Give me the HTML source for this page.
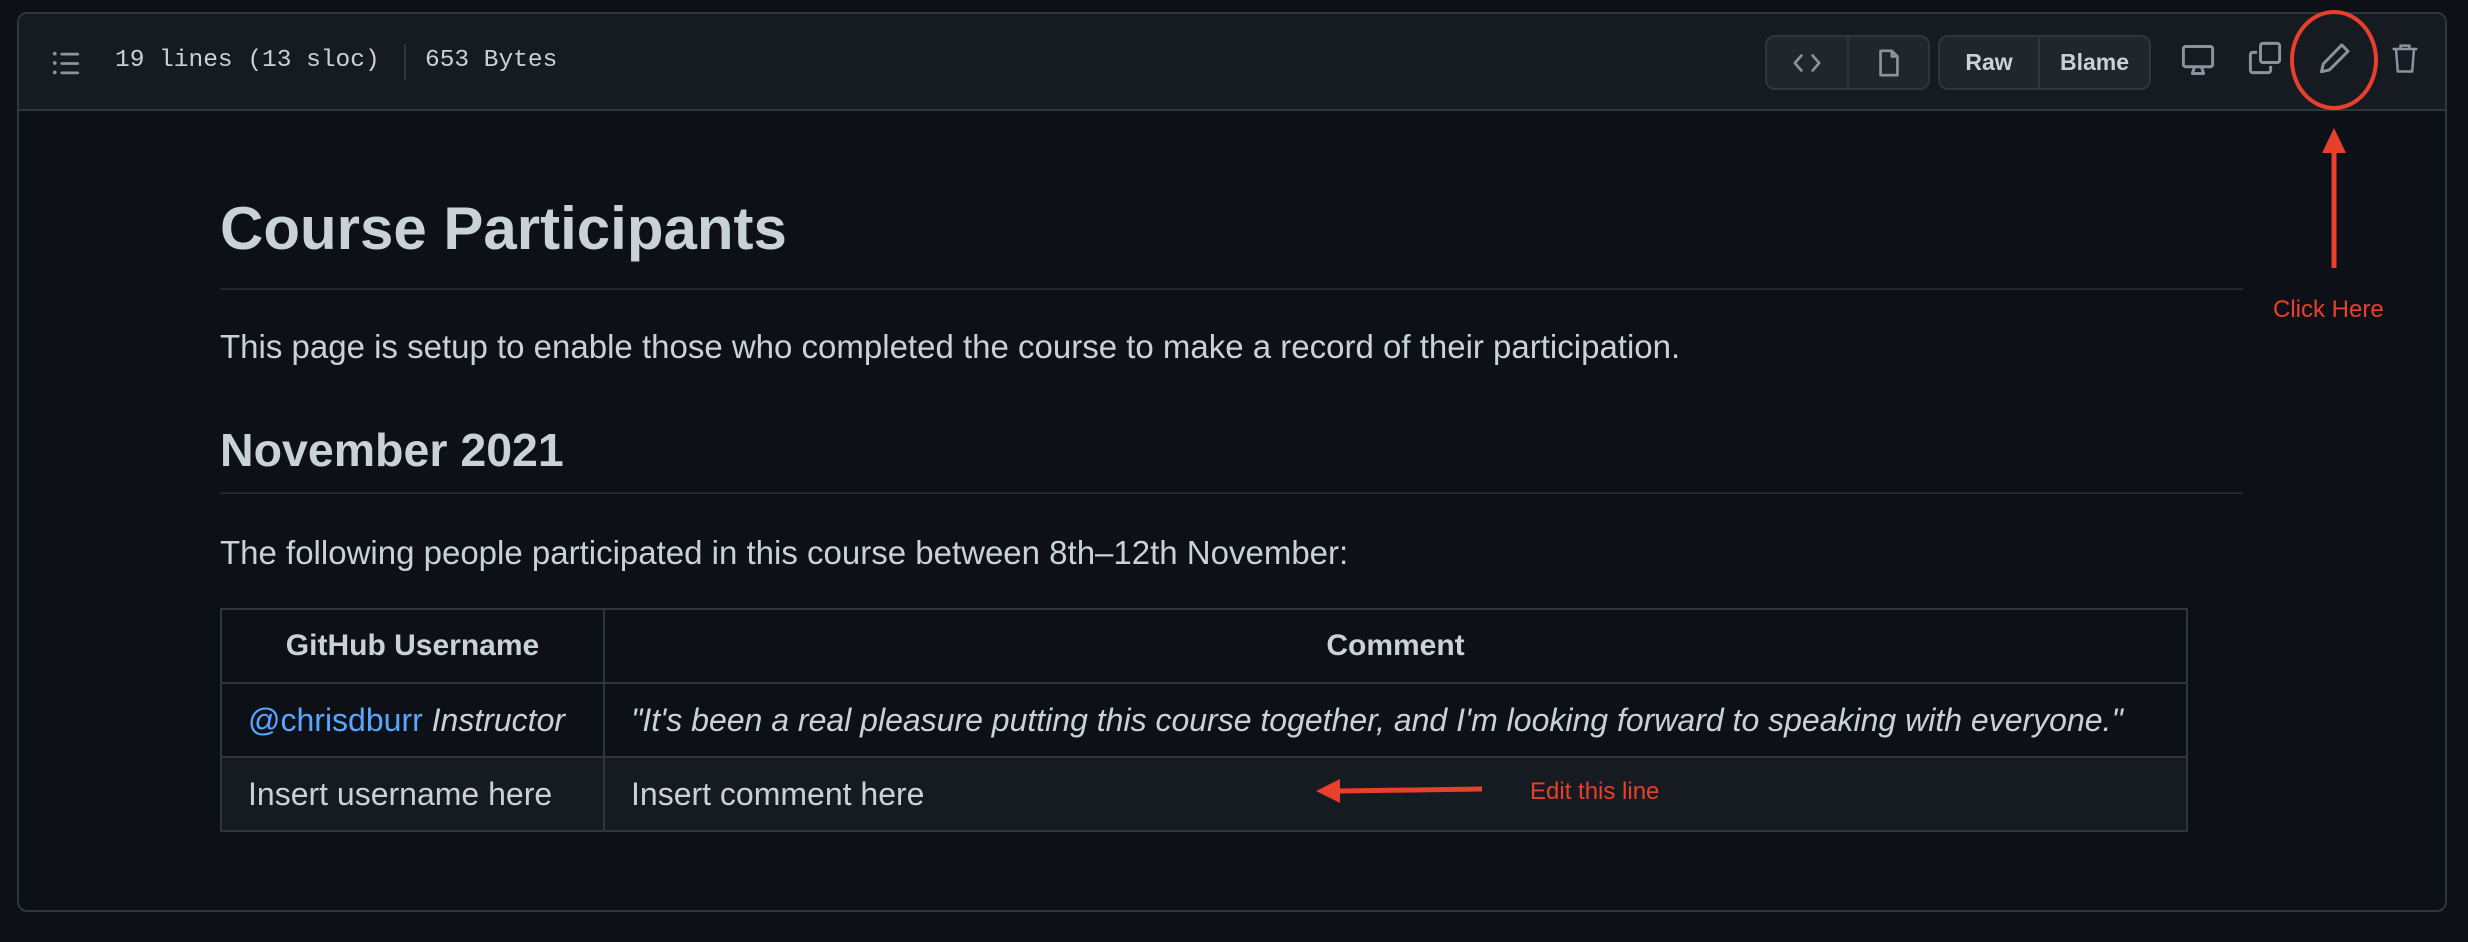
<!DOCTYPE html>
<html><head><meta charset="utf-8"><style>
*{margin:0;padding:0;box-sizing:border-box}
body{width:2468px;height:942px;background:#0d1117;font-family:"Liberation Sans",sans-serif;color:#c9d1d9;position:relative;overflow:hidden}
.box{position:absolute;left:17px;top:12px;width:2430px;height:900px;border:2px solid #30363d;border-radius:10px;overflow:hidden}
.hdr{position:absolute;left:0;top:0;right:0;height:97px;background:#161b22;border-bottom:2px solid #30363d}
.a{position:absolute;white-space:nowrap}
.mono{font-family:"Liberation Mono",monospace;font-size:24.5px;color:#c9d1d9}
.grp{position:absolute;top:21px;height:55px;border:2px solid #30363d;border-radius:10px;background:#21262d;display:flex}
.grp div{display:flex;align-items:center;justify-content:center;font-weight:bold;font-size:23px;color:#c9d1d9}
.rule{position:absolute;left:220px;width:2023px;height:2px;background:#21262d}
table{position:absolute;left:220px;top:608px;border-collapse:collapse;font-size:32px}
td,th{border:2px solid #30363d;height:74px;padding:0 26px}
th{font-weight:bold;text-align:center;font-size:30px}
.red{color:#e8402a;font-size:24px;z-index:5}
.ov{z-index:5}
</style></head><body>
<div class="box"><div class="hdr">
<svg class="a" style="left:32px;top:34px" width="30" height="30" viewBox="0 0 16 16" fill="#8b949e"><path d="M2 4a1 1 0 100-2 1 1 0 000 2zm3.75-1.5a.75.75 0 000 1.5h8.5a.75.75 0 000-1.5h-8.5zm0 5a.75.75 0 000 1.5h8.5a.75.75 0 000-1.5h-8.5zm0 5a.75.75 0 000 1.5h8.5a.75.75 0 000-1.5h-8.5zM3 8a1 1 0 11-2 0 1 1 0 012 0zm-1 6a1 1 0 100-2 1 1 0 000 2z"/></svg>
<div class="a mono" style="left:96px;top:33px">19 lines (13 sloc)</div>
<div class="a" style="left:385px;top:30px;width:2px;height:36px;background:#30363d"></div>
<div class="a mono" style="left:406px;top:33px">653 Bytes</div>
<div class="grp" style="left:1746px;width:165px">
<div style="width:82px;border-right:2px solid #30363d"><svg width="30" height="30" viewBox="0 0 16 16" fill="none" stroke="#8b949e" stroke-width="1.4" stroke-linecap="round" stroke-linejoin="round"><path d="M5 4L1.5 8 5 12M11 4l3.5 4L11 12"/></svg></div>
<div style="flex:1"><svg width="30" height="30" viewBox="0 0 16 16" fill="none" stroke="#8b949e" stroke-width="1.4" stroke-linejoin="round"><path d="M3.5 1.5h6l3 3v10h-9z M9.5 1.5v3h3"/></svg></div></div>
<div class="grp" style="left:1919px;width:213px">
<div style="width:100px;border-right:2px solid #30363d">Raw</div><div style="flex:1">Blame</div></div>
<svg class="a" style="left:2161px;top:28px" width="36" height="36" viewBox="0 0 16 16" fill="none" stroke="#8b949e" stroke-width="1.3" stroke-linejoin="round"><rect x="1.5" y="2" width="13" height="9" rx="1"/><path d="M6.5 11l-1 3h5l-1-3"/></svg>
<svg class="a" style="left:2228px;top:26px" width="36" height="36" viewBox="0 0 16 16" fill="none" stroke="#8b949e" stroke-width="1.3" stroke-linejoin="round"><rect x="6" y="1.5" width="8.5" height="8.5" rx="1"/><path d="M4.5 5.5h-2a1 1 0 00-1 1v7a1 1 0 001 1h7a1 1 0 001-1v-2"/></svg>
<svg class="a" style="left:2298px;top:26px" width="36" height="36" viewBox="0 0 16 16" fill="none" stroke="#8b949e" stroke-width="1.3" stroke-linejoin="round"><path d="M11 2.2l2.8 2.8-8.3 8.3-3.5.8.8-3.5z"/></svg>
<svg class="a" style="left:2368px;top:26px" width="36" height="36" viewBox="0 0 16 16" fill="none" stroke="#8b949e" stroke-width="1.1" stroke-linejoin="round"><path d="M2.5 4h11M6 4V2.5h4V4M4 4l.8 10h6.4L12 4"/></svg>
</div></div>
<div class="a" style="left:220px;top:194px;font-size:60px;font-weight:bold">Course Participants</div>
<div class="rule" style="top:288px"></div>
<div class="a" style="left:220px;top:328px;font-size:33px">This page is setup to enable those who completed the course to make a record of their participation.</div>
<div class="a" style="left:220px;top:423px;font-size:46.5px;font-weight:bold">November 2021</div>
<div class="rule" style="top:492px"></div>
<div class="a" style="left:220px;top:534px;font-size:33px">The following people participated in this course between 8th–12th November:</div>
<table><tr><th style="width:383px">GitHub Username</th><th style="width:1583px">Comment</th></tr>
<tr><td><span style="color:#58a6ff">@chrisdburr</span> <i>Instructor</i></td><td><i>"It's been a real pleasure putting this course together, and I'm looking forward to speaking with everyone."</i></td></tr>
<tr style="background:#161b22"><td>Insert username here</td><td>Insert comment here</td></tr></table>
<svg class="a ov" style="left:0;top:0" width="2468" height="942"><ellipse cx="2334" cy="60" rx="42" ry="48" fill="none" stroke="#e8402a" stroke-width="4"/>
<path d="M2334 268V150" stroke="#e8402a" stroke-width="5"/><path d="M2334 128l-12 25h24z" fill="#e8402a"/>
<path d="M1482 789L1340 791" stroke="#e8402a" stroke-width="5"/><path d="M1316 791l24-12v24z" fill="#e8402a"/></svg>
<div class="a red" style="left:2273px;top:296px">Click Here</div>
<div class="a red" style="left:1530px;top:778px">Edit this line</div>
</body></html>
